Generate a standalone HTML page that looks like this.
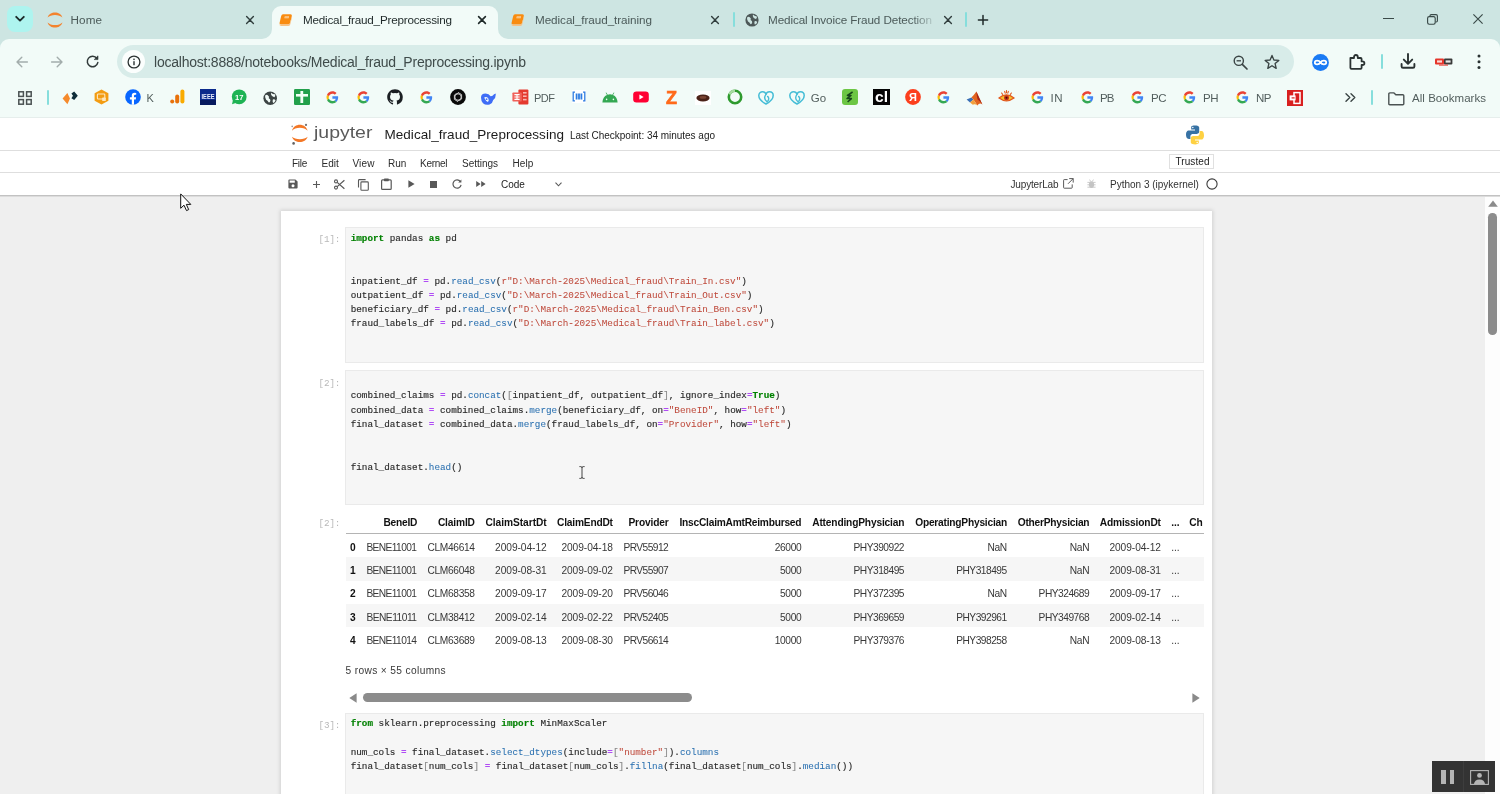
<!DOCTYPE html>
<html lang="en"><head><meta charset="utf-8"><title>Medical_fraud_Preprocessing</title>
<style>

html,body{margin:0;padding:0;}
body{width:1500px;height:794px;overflow:hidden;background:#efefef;}
#root{position:relative;width:1500px;height:794px;overflow:hidden;will-change:transform;font-family:"Liberation Sans",sans-serif;}
#root svg{overflow:visible;}
.code{position:absolute;white-space:pre;font-family:"Liberation Mono",monospace;font-size:9.3px;line-height:14.25px;color:#2a2a2a;margin:0;-webkit-text-stroke:0.15px;}
.t{position:absolute;white-space:pre;}
.m{font-family:"Liberation Mono",monospace;}
.k{color:#008000;font-weight:bold}
.o{color:#b04cf5;font-weight:bold;-webkit-text-stroke:0}
.s{color:#bf4a3c;-webkit-text-stroke:0.05px}
.f{color:#2a70b0;-webkit-text-stroke:0.05px}
.g{color:#8a8a8a}
.cell{position:absolute;left:345px;width:857px;background:#f6f6f6;border:1px solid #eaeaea;box-sizing:content-box;}
</style></head>
<body>
<div id="root">
<div style="position:absolute;left:0px;top:0px;width:1500px;height:50px;background:#cde5e2;"></div>
<div style="position:absolute;left:0px;top:38.5px;width:1500px;height:79.5px;background:#f2fbf8;border-radius:9px 9px 0 0;"></div>
<div style="position:absolute;left:0px;top:117px;width:1500px;height:1px;background:#e6eeec;"></div>
<div style="position:absolute;left:0px;top:118px;width:1500px;height:78px;background:#ffffff;"></div>
<div style="position:absolute;left:0px;top:150px;width:1500px;height:1px;background:#dedede;"></div>
<div style="position:absolute;left:0px;top:172px;width:1500px;height:1px;background:#dedede;"></div>
<div style="position:absolute;left:0px;top:195px;width:1500px;height:1px;background:#c2c2c2;"></div>
<div style="position:absolute;left:0px;top:196px;width:1500px;height:1px;background:#dcdcdc;"></div>
<div style="position:absolute;left:7px;top:6px;width:26px;height:26px;background:#aef4ef;border-radius:8px;"></div>
<svg style="position:absolute;left:15px;top:15px;" width="10" height="8" viewBox="0 0 10 8"><path d="M1.2 1.8 L5 5.6 L8.8 1.8" fill="none" stroke="#1d2b2b" stroke-width="1.9" stroke-linecap="round" stroke-linejoin="round"/></svg>
<svg style="position:absolute;left:46.5px;top:11.5px;" width="16" height="16" viewBox="0 0 16 16"><path d="M0.6 5.6 C2.4 -1.2 13.6 -1.2 15.4 5.6 C12.4 2.2 3.6 2.2 0.6 5.6Z" fill="#f3832e"/><path d="M0.6 10.4 C2.4 17.2 13.6 17.2 15.4 10.4 C12.4 13.8 3.6 13.8 0.6 10.4Z" fill="#f3832e"/></svg>
<svg style="position:absolute;left:246px;top:16px;" width="8" height="8" viewBox="0 0 8 8"><path d="M0.6 0.6 L7.4 7.4 M7.4 0.6 L0.6 7.4" stroke="#303d3d" stroke-width="1.4" stroke-linecap="round"/></svg>
<div style="position:absolute;left:272.4px;top:6px;width:225.8px;height:34px;background:#f2fbf8;border-radius:9px 9px 0 0;"></div>
<svg style="position:absolute;left:262.4px;top:28.5px;" width="10" height="10" viewBox="0 0 10 10"><path d="M10 0 L10 10.5 L0 10.5 L0 10 A10 10 0 0 0 10 0Z" fill="#f2fbf8"/></svg>
<svg style="position:absolute;left:498px;top:28.5px;" width="10" height="10" viewBox="0 0 10 10"><path d="M0 0 L0 10.5 L10 10.5 L10 10 A10 10 0 0 1 0 0Z" fill="#f2fbf8"/></svg>
<svg style="position:absolute;left:279.2px;top:13.9px;" width="13.6" height="12.6" viewBox="0 0 15 14"><path d="M4.4 0.4 L12.6 0.4 Q14.8 0.4 14.2 2.6 L12.2 10 Q11.7 11.8 9.8 11.8 L2.2 11.8 Q0 11.8 0.6 9.8 L2.4 2.2 Q2.9 0.4 4.4 0.4Z" fill="#f98c10"/><path d="M0.6 10.8 Q1 11.9 2.4 11.8 L9.8 11.8 Q11.7 11.8 12.2 10 L14.3 2.2 Q14.7 3 14.4 4 L12.4 11.6 Q11.9 13.4 10 13.4 L2.4 13.4 Q0.2 13.4 0.6 10.8Z" fill="#f7c183"/><path d="M6.4 2.4 L11.2 2.4 L10.7 4.6 L5.9 4.6Z" fill="#fbd9ae"/><path d="M6.6 3.5 L10.6 3.5" stroke="#f98c10" stroke-width="0.5"/></svg>
<svg style="position:absolute;left:478px;top:16px;" width="8" height="8" viewBox="0 0 8 8"><path d="M0.6 0.6 L7.4 7.4 M7.4 0.6 L0.6 7.4" stroke="#1f2929" stroke-width="1.6" stroke-linecap="round"/></svg>
<svg style="position:absolute;left:511.2px;top:13.9px;" width="13.6" height="12.6" viewBox="0 0 15 14"><path d="M4.4 0.4 L12.6 0.4 Q14.8 0.4 14.2 2.6 L12.2 10 Q11.7 11.8 9.8 11.8 L2.2 11.8 Q0 11.8 0.6 9.8 L2.4 2.2 Q2.9 0.4 4.4 0.4Z" fill="#f98c10"/><path d="M0.6 10.8 Q1 11.9 2.4 11.8 L9.8 11.8 Q11.7 11.8 12.2 10 L14.3 2.2 Q14.7 3 14.4 4 L12.4 11.6 Q11.9 13.4 10 13.4 L2.4 13.4 Q0.2 13.4 0.6 10.8Z" fill="#f7c183"/><path d="M6.4 2.4 L11.2 2.4 L10.7 4.6 L5.9 4.6Z" fill="#fbd9ae"/><path d="M6.6 3.5 L10.6 3.5" stroke="#f98c10" stroke-width="0.5"/></svg>
<svg style="position:absolute;left:710.5px;top:16px;" width="8" height="8" viewBox="0 0 8 8"><path d="M0.6 0.6 L7.4 7.4 M7.4 0.6 L0.6 7.4" stroke="#303d3d" stroke-width="1.4" stroke-linecap="round"/></svg>
<div style="position:absolute;left:733px;top:12px;width:2px;height:15px;background:#86dedc;border-radius:1px;"></div>
<svg style="position:absolute;left:744.5px;top:13px;" width="14" height="14" viewBox="0 0 14 14"><circle cx="7" cy="7" r="6.6" fill="#4d5858"/><path d="M2.2 4.2 Q4 3 5 4.6 Q6.4 5.4 5.6 7 Q7.4 7.6 7.2 9.6 Q6.6 11.6 5.4 11 Q4.6 9 3 8.4 Q1.4 6.4 2.2 4.2Z M8 1.6 Q9.6 3.4 11.6 3.2 Q12.6 5 11 6 Q9.4 5.6 8.4 4.4 Q7.4 3 8 1.6Z M9.6 8.2 Q11.4 7.6 12.2 9.2 Q11.4 11.4 9.8 11.6 Q9 10 9.6 8.2Z" fill="#cde5e2"/></svg>
<svg style="position:absolute;left:943.5px;top:16px;" width="8" height="8" viewBox="0 0 8 8"><path d="M0.6 0.6 L7.4 7.4 M7.4 0.6 L0.6 7.4" stroke="#303d3d" stroke-width="1.4" stroke-linecap="round"/></svg>
<div style="position:absolute;left:964.5px;top:12px;width:2px;height:15px;background:#86dedc;border-radius:1px;"></div>
<svg style="position:absolute;left:978px;top:15px;" width="10" height="10" viewBox="0 0 10 10"><path d="M5 0.4 V9.6 M0.4 5 H9.6" stroke="#1f2a2a" stroke-width="1.5" stroke-linecap="round"/></svg>
<div style="position:absolute;left:1383px;top:18px;width:11px;height:1.2px;background:#3a4a48;"></div>
<svg style="position:absolute;left:1427px;top:14px;" width="11" height="11" viewBox="0 0 11 11"><rect x="0.6" y="2.6" width="7.6" height="7.6" rx="1.6" fill="none" stroke="#3a4a48" stroke-width="1.15"/><path d="M3 2.4 V1.8 Q3 0.6 4.2 0.6 H9 Q10.4 0.6 10.4 2 V6.8 Q10.4 8 9.2 8 H8.6" fill="none" stroke="#3a4a48" stroke-width="1.15"/></svg>
<svg style="position:absolute;left:1473px;top:14px;" width="10" height="10" viewBox="0 0 10 10"><path d="M0.4 0.4 L9.6 9.6 M9.6 0.4 L0.4 9.6" stroke="#3a4a48" stroke-width="1.15"/></svg>
<svg style="position:absolute;left:15.5px;top:55.5px;" width="12" height="12" viewBox="0 0 12 12"><path d="M11.4 6 H1.2 M5.8 1.2 L1 6 L5.8 10.8" fill="none" stroke="#a3adac" stroke-width="1.4" stroke-linecap="round" stroke-linejoin="round"/></svg>
<svg style="position:absolute;left:50.5px;top:55.5px;" width="12" height="12" viewBox="0 0 12 12"><path d="M0.6 6 H10.8 M6.2 1.2 L11 6 L6.2 10.8" fill="none" stroke="#a3adac" stroke-width="1.4" stroke-linecap="round" stroke-linejoin="round"/></svg>
<svg style="position:absolute;left:85.5px;top:54.5px;" width="13" height="13" viewBox="0 0 13 13"><path d="M10.9 3.4 A5.3 5.3 0 1 0 11.8 7.6" fill="none" stroke="#313a3a" stroke-width="1.5" stroke-linecap="round"/><path d="M12 0.8 V4.6 H8.2Z" fill="#313a3a" stroke="#313a3a" stroke-width="0.6" stroke-linejoin="round"/></svg>
<div style="position:absolute;left:117px;top:45px;width:1177px;height:33px;background:#d8ece9;border-radius:16.5px;"></div>
<div style="position:absolute;left:122px;top:50px;width:23px;height:23px;background:#fbfefd;border-radius:50%;"></div>
<svg style="position:absolute;left:126.5px;top:54.5px;" width="14" height="14" viewBox="0 0 14 14"><circle cx="7" cy="7" r="5.9" fill="none" stroke="#2a3232" stroke-width="1.3"/><rect x="6.3" y="6.2" width="1.4" height="4" fill="#2a3232"/><rect x="6.3" y="3.6" width="1.4" height="1.5" fill="#2a3232"/></svg>
<svg style="position:absolute;left:1233px;top:54.5px;" width="15" height="15" viewBox="0 0 15 15"><circle cx="5.8" cy="5.8" r="4.6" fill="none" stroke="#3a4444" stroke-width="1.4"/><path d="M9.3 9.3 L14 14" stroke="#3a4444" stroke-width="1.7" stroke-linecap="round"/><path d="M3.6 5.8 H8" stroke="#3a4444" stroke-width="1.3"/></svg>
<svg style="position:absolute;left:1263.5px;top:54px;" width="16" height="16" viewBox="0 0 16 16"><path d="M8 1.4 L9.9 6 L14.8 6.4 L11.1 9.6 L12.2 14.4 L8 11.8 L3.8 14.4 L4.9 9.6 L1.2 6.4 L6.1 6Z" fill="none" stroke="#3a4444" stroke-width="1.35" stroke-linejoin="round"/></svg>
<svg style="position:absolute;left:1312px;top:53.5px;" width="17" height="17" viewBox="0 0 17 17"><circle cx="8.5" cy="8.5" r="8.4" fill="#1a7af4"/><path d="M8.5 8.5 C7 6 2.8 6 2.8 8.5 C2.8 11 7 11 8.5 8.5 C10 6 14.2 6 14.2 8.5 C14.2 11 10 11 8.5 8.5Z" fill="none" stroke="#ffffff" stroke-width="1.8"/></svg>
<svg style="position:absolute;left:1348px;top:53px;" width="18" height="17" viewBox="0 0 18 17"><path d="M2.4 5 H6 V4.2 Q6 2 7.9 2 Q9.8 2 9.8 4.2 V5 H12.6 Q13.6 5 13.6 6 V8.4 H14.4 Q16.4 8.4 16.4 10.2 Q16.4 12 14.4 12 H13.6 V14.8 Q13.6 15.8 12.6 15.8 H3.4 Q2.4 15.8 2.4 14.8Z" fill="none" stroke="#2a3232" stroke-width="1.8" stroke-linejoin="round"/></svg>
<div style="position:absolute;left:1381px;top:54px;width:2px;height:15px;background:#86dedc;border-radius:1px;"></div>
<svg style="position:absolute;left:1400px;top:53px;" width="16" height="16" viewBox="0 0 16 16"><path d="M8 1 V10.6 M3.8 6.6 L8 10.8 L12.2 6.6" fill="none" stroke="#2a3232" stroke-width="1.9" stroke-linecap="round" stroke-linejoin="round"/><path d="M1.6 11 V13.4 Q1.6 14.8 3 14.8 H13 Q14.4 14.8 14.4 13.4 V11" fill="none" stroke="#2a3232" stroke-width="1.9" stroke-linecap="round"/></svg>
<svg style="position:absolute;left:1435px;top:58px;" width="18" height="8" viewBox="0 0 18 8"><rect x="0" y="0.6" width="9" height="6" rx="1" fill="#e5352b"/><rect x="9" y="0.6" width="8.4" height="6" rx="1" fill="#3a3a3a"/><rect x="2" y="2.4" width="5" height="2.2" fill="#fbd9d6"/><rect x="10.6" y="2.4" width="5" height="2.2" fill="#e8e8e8"/><rect x="4" y="6.6" width="9" height="1" fill="#e5352b"/></svg>
<svg style="position:absolute;left:1476.6px;top:53px;" width="4" height="17" viewBox="0 0 4 17"><circle cx="2" cy="3" r="1.5" fill="#2a3232"/><circle cx="2" cy="8.7" r="1.5" fill="#2a3232"/><circle cx="2" cy="14.4" r="1.5" fill="#2a3232"/></svg>
<svg style="position:absolute;left:18px;top:91px;" width="14" height="14" viewBox="0 0 14 14"><g fill="none" stroke="#4a5252" stroke-width="1.5"><rect x="0.8" y="0.8" width="4.6" height="4.6"/><rect x="8.6" y="0.8" width="4.6" height="4.6"/><rect x="0.8" y="8.6" width="4.6" height="4.6"/><rect x="8.6" y="8.6" width="4.6" height="4.6"/></g></svg>
<div style="position:absolute;left:47px;top:90px;width:2px;height:15px;background:#86dedc;border-radius:1px;"></div>
<svg style="position:absolute;left:62px;top:91px;" width="17" height="14" viewBox="0 0 17 14"><path d="M0.6 7.6 L5.4 2 L8 7.6 L5.4 13.2Z" fill="#f58a2c"/><path d="M9.4 2.4 L12.2 0.6 L15.8 4.8 L12.2 9 L9.4 7.2 L11 4.8Z" fill="#0f2d3a"/></svg>
<svg style="position:absolute;left:94px;top:89.3px;" width="15" height="16" viewBox="0 0 15 16"><path d="M7.5 0.4 L14.4 4.2 V11.8 L7.5 15.6 L0.6 11.8 V4.2Z" fill="#f39c12"/><rect x="3.4" y="5" width="7.4" height="5" rx="0.8" fill="none" stroke="#fde7c0" stroke-width="1.1"/><rect x="8.2" y="8.6" width="3.6" height="3.4" rx="0.6" fill="#fde7c0"/></svg>
<svg style="position:absolute;left:125px;top:89.3px;" width="16" height="16" viewBox="0 0 16 16"><circle cx="8" cy="8" r="7.8" fill="#0866ff"/><path d="M9 15.7 V10.4 H10.8 L11.1 8.2 H9 V6.9 Q9 5.8 10.2 5.8 H11.2 V3.9 Q10.4 3.75 9.6 3.75 Q6.8 3.75 6.8 6.6 V8.2 H4.9 V10.4 H6.8 V15.7Z" fill="#ffffff"/></svg>
<svg style="position:absolute;left:170px;top:89.3px;" width="15" height="15" viewBox="0 0 15 15"><rect x="10.4" y="0.4" width="4" height="14.2" rx="2" fill="#f9ab00"/><rect x="5.2" y="5.6" width="4" height="9" rx="2" fill="#e8710a"/><circle cx="2.2" cy="12.6" r="2" fill="#e8710a"/></svg>
<svg style="position:absolute;left:200px;top:89.3px;" width="16" height="16" viewBox="0 0 16 16"><rect width="16" height="16" fill="#0b2a8c"/><rect y="11" width="16" height="5" fill="#071a5e"/><text x="8" y="10.4" font-family="Liberation Sans, sans-serif" font-size="6.6" font-weight="700" fill="#e9eefc" text-anchor="middle" textLength="13" lengthAdjust="spacingAndGlyphs">IEEE</text></svg>
<svg style="position:absolute;left:231px;top:89.3px;" width="16" height="16" viewBox="0 0 16 16"><circle cx="8.2" cy="7.8" r="7.4" fill="#1eb354"/><path d="M2 11 L1 15.2 L5.4 13.8Z" fill="#1eb354"/><text x="8.2" y="10.6" font-family="Liberation Sans, sans-serif" font-size="7.6" font-weight="700" fill="#ffffff" text-anchor="middle">17</text></svg>
<svg style="position:absolute;left:263px;top:90.6px;" width="14.4" height="14.4" viewBox="0 0 14 14"><circle cx="7" cy="7" r="6.6" fill="#3c4444"/><path d="M2.2 4.2 Q4 3 5 4.6 Q6.4 5.4 5.6 7 Q7.4 7.6 7.2 9.6 Q6.6 11.6 5.4 11 Q4.6 9 3 8.4 Q1.4 6.4 2.2 4.2Z M8 1.6 Q9.6 3.4 11.6 3.2 Q12.6 5 11 6 Q9.4 5.6 8.4 4.4 Q7.4 3 8 1.6Z M9.6 8.2 Q11.4 7.6 12.2 9.2 Q11.4 11.4 9.8 11.6 Q9 10 9.6 8.2Z" fill="#f2fbf8"/></svg>
<svg style="position:absolute;left:293.5px;top:89.3px;" width="16" height="16" viewBox="0 0 16 16"><rect width="16" height="16" rx="1.2" fill="#22a04b"/><rect x="6.4" y="2" width="2.8" height="12" fill="#f2fff5"/><rect x="2" y="5" width="12" height="2.6" fill="#f2fff5"/></svg>
<svg style="position:absolute;left:325.6px;top:91.39999999999999px;" width="12.8" height="12.8" viewBox="0 0 14 14"><path d="M13.3 7.15 c0 -0.5 -0.04 -0.9 -0.13 -1.3 H7 v2.5 h3.6 c-0.08 0.6 -0.47 1.5 -1.35 2.1 l2.05 1.6 c1.25 -1.15 2 -2.85 2 -4.9z" fill="#4285f4"/><path d="M7 13.6 c1.8 0 3.3 -0.6 4.4 -1.6 l-2.1 -1.65 c-0.56 0.4 -1.3 0.66 -2.3 0.66 -1.75 0 -3.25 -1.15 -3.8 -2.75 l-2.1 1.63 C2.2 12.1 4.4 13.6 7 13.6z" fill="#34a853"/><path d="M3.2 8.25 a4 4 0 0 1 0 -2.5 L1.1 4.1 a6.6 6.6 0 0 0 0 5.8z" fill="#fbbc05"/><path d="M7 3 c1.25 0 2.1 0.54 2.6 1 l1.9 -1.85 C10.3 1.05 8.8 0.4 7 0.4 4.4 0.4 2.2 1.9 1.1 4.1 l2.1 1.65 C3.75 4.15 5.25 3 7 3z" fill="#ea4335"/></svg>
<svg style="position:absolute;left:356.6px;top:91.39999999999999px;" width="12.8" height="12.8" viewBox="0 0 14 14"><path d="M13.3 7.15 c0 -0.5 -0.04 -0.9 -0.13 -1.3 H7 v2.5 h3.6 c-0.08 0.6 -0.47 1.5 -1.35 2.1 l2.05 1.6 c1.25 -1.15 2 -2.85 2 -4.9z" fill="#4285f4"/><path d="M7 13.6 c1.8 0 3.3 -0.6 4.4 -1.6 l-2.1 -1.65 c-0.56 0.4 -1.3 0.66 -2.3 0.66 -1.75 0 -3.25 -1.15 -3.8 -2.75 l-2.1 1.63 C2.2 12.1 4.4 13.6 7 13.6z" fill="#34a853"/><path d="M3.2 8.25 a4 4 0 0 1 0 -2.5 L1.1 4.1 a6.6 6.6 0 0 0 0 5.8z" fill="#fbbc05"/><path d="M7 3 c1.25 0 2.1 0.54 2.6 1 l1.9 -1.85 C10.3 1.05 8.8 0.4 7 0.4 4.4 0.4 2.2 1.9 1.1 4.1 l2.1 1.65 C3.75 4.15 5.25 3 7 3z" fill="#ea4335"/></svg>
<svg style="position:absolute;left:387px;top:89.3px;" width="16" height="16" viewBox="0 0 16 16"><path d="M8 0.3 C3.7 0.3 0.2 3.8 0.2 8.1 c0 3.45 2.24 6.37 5.34 7.4 .39 .07 .53 -.17 .53 -.38 l-.01 -1.45 c-2.17 .47 -2.63 -.92 -2.63 -.92 -.35 -.9 -.87 -1.14 -.87 -1.14 -.71 -.48 .05 -.47 .05 -.47 .78 .05 1.2 .8 1.2 .8 .7 1.2 1.83 .85 2.28 .65 .07 -.5 .27 -.85 .5 -1.05 -1.73 -.2 -3.55 -.87 -3.55 -3.86 0 -.85 .3 -1.55 .8 -2.1 -.08 -.2 -.35 -1 .08 -2.06 0 0 .65 -.2 2.14 .8 a7.4 7.4 0 0 1 3.9 0 c1.5 -1 2.14 -.8 2.14 -.8 .43 1.07 .16 1.87 .08 2.06 .5 .55 .8 1.25 .8 2.1 0 3 -1.83 3.66 -3.57 3.85 .28 .24 .53 .72 .53 1.45 l-.01 2.15 c0 .2 .14 .45 .54 .38 A7.8 7.8 0 0 0 15.8 8.1 C15.8 3.8 12.3 .3 8 .3z" fill="#1b1f23"/></svg>
<svg style="position:absolute;left:419.6px;top:91.39999999999999px;" width="12.8" height="12.8" viewBox="0 0 14 14"><path d="M13.3 7.15 c0 -0.5 -0.04 -0.9 -0.13 -1.3 H7 v2.5 h3.6 c-0.08 0.6 -0.47 1.5 -1.35 2.1 l2.05 1.6 c1.25 -1.15 2 -2.85 2 -4.9z" fill="#4285f4"/><path d="M7 13.6 c1.8 0 3.3 -0.6 4.4 -1.6 l-2.1 -1.65 c-0.56 0.4 -1.3 0.66 -2.3 0.66 -1.75 0 -3.25 -1.15 -3.8 -2.75 l-2.1 1.63 C2.2 12.1 4.4 13.6 7 13.6z" fill="#34a853"/><path d="M3.2 8.25 a4 4 0 0 1 0 -2.5 L1.1 4.1 a6.6 6.6 0 0 0 0 5.8z" fill="#fbbc05"/><path d="M7 3 c1.25 0 2.1 0.54 2.6 1 l1.9 -1.85 C10.3 1.05 8.8 0.4 7 0.4 4.4 0.4 2.2 1.9 1.1 4.1 l2.1 1.65 C3.75 4.15 5.25 3 7 3z" fill="#ea4335"/></svg>
<svg style="position:absolute;left:449.5px;top:89.3px;" width="16" height="16" viewBox="0 0 16 16"><circle cx="8" cy="8" r="7.9" fill="#0a0a0a"/><g fill="none" stroke="#d8d8d8" stroke-width="0.9"><circle cx="8" cy="8" r="3.2"/><path d="M8 3.4 L11.6 5.6 V10 M8 12.6 L4.4 10.4 V6 M4.6 5.6 L8.4 4 M11.4 10.4 L7.6 12"/></g></svg>
<svg style="position:absolute;left:480px;top:91.5px;" width="17" height="14" viewBox="0 0 17 14"><path d="M1 5.6 Q1 1.4 5.6 1.4 Q9 1.4 10.6 4.2 Q12.6 4.4 13.8 2.6 Q14.6 1.4 16.2 1.8 Q15.4 2.4 15.6 3.6 Q15.8 6.4 13.2 8 Q12.8 11 9.6 12.4 Q5.8 13.6 3 11.2 Q1 9.2 1 5.6Z" fill="#3f6df6"/><path d="M4.2 5.4 Q6.4 4.2 8.2 6.2 Q9.4 8.2 8 10 Q6 9.4 5.2 7.6Z" fill="#f3faf9"/><circle cx="6.6" cy="7.2" r="0.9" fill="#3f6df6"/></svg>
<svg style="position:absolute;left:512px;top:89.3px;" width="17" height="16" viewBox="0 0 17 16"><rect x="6.4" y="0.6" width="10" height="14.8" rx="1" fill="#e43a2f"/><rect x="0.4" y="3.4" width="9.4" height="9.2" rx="0.8" fill="#f0625a"/><path d="M2.4 5.6 H7.6 M2.4 8 H7.6 M2.4 10.4 H7.6 M5 5.6 V10.4" stroke="#ffffff" stroke-width="1.1"/><rect x="11" y="3" width="3.6" height="1.6" fill="#f9b5b0"/><rect x="11" y="6.4" width="3.6" height="1.6" fill="#f9b5b0"/><rect x="11" y="9.8" width="3.6" height="1.6" fill="#f9b5b0"/></svg>
<svg style="position:absolute;left:571.5px;top:90.3px;" width="14" height="13" viewBox="0 0 14 13"><rect x="0" y="0" width="14" height="13" fill="#ffffff"/><path d="M3 2.2 H1.2 V10.8 H3 M11 2.2 H12.8 V10.8 H11" fill="none" stroke="#2f7de1" stroke-width="1.3"/><path d="M4.6 3.6 V9.4 M7 3.6 V9.4 M9.4 3.6 V9.4" stroke="#2f7de1" stroke-width="1.8"/></svg>
<svg style="position:absolute;left:601.5px;top:92px;" width="16" height="11" viewBox="0 0 16 11"><path d="M0.4 10.6 Q0.8 4.6 5 3 L3.6 0.8 L4.2 0.4 L5.7 2.7 Q8 1.9 10.3 2.7 L11.8 0.4 L12.4 0.8 L11 3 Q15.2 4.6 15.6 10.6Z" fill="#34a853"/><circle cx="4.6" cy="7.4" r="0.8" fill="#eafff0"/><circle cx="11.4" cy="7.4" r="0.8" fill="#eafff0"/></svg>
<svg style="position:absolute;left:632.5px;top:91.2px;" width="16" height="12" viewBox="0 0 16 12"><rect x="0.2" y="0.4" width="15.6" height="11" rx="3.2" fill="#ff0033"/><path d="M6.4 3.4 L10.6 5.9 L6.4 8.4Z" fill="#ffffff"/></svg>
<svg style="position:absolute;left:665px;top:89.4px;" width="13" height="16" viewBox="0 0 13 16"><text x="6.5" y="14.6" font-family="Liberation Sans, sans-serif" font-size="18" font-weight="700" fill="#ff6a1a" stroke="#ff6a1a" stroke-width="0.7" text-anchor="middle">Z</text></svg>
<svg style="position:absolute;left:695px;top:91px;" width="16" height="14" viewBox="0 0 16 14"><rect width="16" height="14" fill="#ffffff"/><ellipse cx="8" cy="7" rx="6.6" ry="3.4" fill="#4a2218"/><ellipse cx="8" cy="6.4" rx="3.4" ry="1.4" fill="#7a4433"/></svg>
<svg style="position:absolute;left:726.5px;top:89.3px;" width="16" height="16" viewBox="0 0 16 16"><circle cx="8" cy="8" r="6.2" fill="none" stroke="#2e9a2e" stroke-width="2.6"/><path d="M8 1.8 A6.2 6.2 0 0 0 2.4 5.4" fill="none" stroke="#a6dba0" stroke-width="2.6"/></svg>
<svg style="position:absolute;left:757.5px;top:90.6px;" width="16" height="14" viewBox="0 0 16 14"><path d="M8 13 C3 10.4 0.8 7.4 0.8 4.6 C0.8 2.2 2.6 0.8 4.6 0.8 C6.4 0.8 7.6 2 8 3.4 C8.4 2 9.6 0.8 11.4 0.8 C13.4 0.8 15.2 2.2 15.2 4.6 C15.2 7.4 13 10.4 8 13Z" fill="none" stroke="#45bdd6" stroke-width="1.5" stroke-linejoin="round"/><path d="M8 3.4 C6.2 5.8 6.4 8.8 9 10.8 C11.2 9.2 11.2 6.8 9.6 5.4" fill="none" stroke="#45bdd6" stroke-width="1.4" stroke-linecap="round"/></svg>
<svg style="position:absolute;left:789.0px;top:90.6px;" width="16" height="14" viewBox="0 0 16 14"><path d="M8 13 C3 10.4 0.8 7.4 0.8 4.6 C0.8 2.2 2.6 0.8 4.6 0.8 C6.4 0.8 7.6 2 8 3.4 C8.4 2 9.6 0.8 11.4 0.8 C13.4 0.8 15.2 2.2 15.2 4.6 C15.2 7.4 13 10.4 8 13Z" fill="none" stroke="#45bdd6" stroke-width="1.5" stroke-linejoin="round"/><path d="M8 3.4 C6.2 5.8 6.4 8.8 9 10.8 C11.2 9.2 11.2 6.8 9.6 5.4" fill="none" stroke="#45bdd6" stroke-width="1.4" stroke-linecap="round"/></svg>
<svg style="position:absolute;left:842px;top:89.3px;" width="16" height="16" viewBox="0 0 16 16"><rect width="16" height="16" rx="3" fill="#6cc644"/><path d="M10.6 3 L5.4 6.4 H9 L5 9.6 H9.4 L5.6 13" fill="none" stroke="#17451a" stroke-width="1.5" stroke-linejoin="round"/></svg>
<svg style="position:absolute;left:873px;top:89.3px;" width="17" height="16" viewBox="0 0 17 16"><rect width="17" height="16" fill="#050505"/><text x="8.5" y="13" font-family="Liberation Sans, sans-serif" font-size="14" font-weight="700" fill="#ffffff" text-anchor="middle" textLength="13" lengthAdjust="spacingAndGlyphs">cl</text></svg>
<svg style="position:absolute;left:904.5px;top:89.3px;" width="16" height="16" viewBox="0 0 16 16"><circle cx="8" cy="8" r="7.9" fill="#fc3f1d"/><text x="8" y="12" font-family="Liberation Sans, sans-serif" font-size="11" font-weight="700" fill="#ffffff" text-anchor="middle">Я</text></svg>
<svg style="position:absolute;left:936.6px;top:91.39999999999999px;" width="12.8" height="12.8" viewBox="0 0 14 14"><path d="M13.3 7.15 c0 -0.5 -0.04 -0.9 -0.13 -1.3 H7 v2.5 h3.6 c-0.08 0.6 -0.47 1.5 -1.35 2.1 l2.05 1.6 c1.25 -1.15 2 -2.85 2 -4.9z" fill="#4285f4"/><path d="M7 13.6 c1.8 0 3.3 -0.6 4.4 -1.6 l-2.1 -1.65 c-0.56 0.4 -1.3 0.66 -2.3 0.66 -1.75 0 -3.25 -1.15 -3.8 -2.75 l-2.1 1.63 C2.2 12.1 4.4 13.6 7 13.6z" fill="#34a853"/><path d="M3.2 8.25 a4 4 0 0 1 0 -2.5 L1.1 4.1 a6.6 6.6 0 0 0 0 5.8z" fill="#fbbc05"/><path d="M7 3 c1.25 0 2.1 0.54 2.6 1 l1.9 -1.85 C10.3 1.05 8.8 0.4 7 0.4 4.4 0.4 2.2 1.9 1.1 4.1 l2.1 1.65 C3.75 4.15 5.25 3 7 3z" fill="#ea4335"/></svg>
<svg style="position:absolute;left:966px;top:91px;" width="17" height="15" viewBox="0 0 17 15"><path d="M0.6 8.6 L5.4 6.4 L7.4 8.4 L4 11.4Z" fill="#3a6fb6"/><path d="M5.4 6.4 Q8.4 3.4 10.4 0.4 Q12.6 5.4 16.4 13.4 Q13.4 11.4 11.4 14.4 Q9.4 11.4 7.4 8.4Z" fill="#e2641f"/><path d="M10.4 0.4 Q12.6 5.4 16.4 13.4 Q13.6 9.4 11.6 8.4 Q10.6 4.4 10.4 0.4Z" fill="#a4241a"/><path d="M4 11.4 L7.4 8.4 Q9.4 11.4 11.4 14.4 Q8.6 12.6 6.8 13.8Z" fill="#f2a03d"/></svg>
<svg style="position:absolute;left:998px;top:89.3px;" width="17" height="15" viewBox="0 0 17 15"><path d="M1 9 Q8.5 2.6 16 9 Q8.5 14.6 1 9Z" fill="#f7c12d" stroke="#e1571c" stroke-width="1.2"/><circle cx="8.5" cy="8.8" r="2.5" fill="#c5311a"/><circle cx="8.5" cy="8.8" r="1" fill="#3a0f0a"/><path d="M3.6 4 L4.6 5.4 M6.6 2.4 L7.2 4.2 M10.4 2.4 L9.8 4.2 M13.4 4 L12.4 5.4 M8.5 1.6 V3.8" stroke="#e1571c" stroke-width="1.1" stroke-linecap="round"/></svg>
<svg style="position:absolute;left:1030.6px;top:91.39999999999999px;" width="12.8" height="12.8" viewBox="0 0 14 14"><path d="M13.3 7.15 c0 -0.5 -0.04 -0.9 -0.13 -1.3 H7 v2.5 h3.6 c-0.08 0.6 -0.47 1.5 -1.35 2.1 l2.05 1.6 c1.25 -1.15 2 -2.85 2 -4.9z" fill="#4285f4"/><path d="M7 13.6 c1.8 0 3.3 -0.6 4.4 -1.6 l-2.1 -1.65 c-0.56 0.4 -1.3 0.66 -2.3 0.66 -1.75 0 -3.25 -1.15 -3.8 -2.75 l-2.1 1.63 C2.2 12.1 4.4 13.6 7 13.6z" fill="#34a853"/><path d="M3.2 8.25 a4 4 0 0 1 0 -2.5 L1.1 4.1 a6.6 6.6 0 0 0 0 5.8z" fill="#fbbc05"/><path d="M7 3 c1.25 0 2.1 0.54 2.6 1 l1.9 -1.85 C10.3 1.05 8.8 0.4 7 0.4 4.4 0.4 2.2 1.9 1.1 4.1 l2.1 1.65 C3.75 4.15 5.25 3 7 3z" fill="#ea4335"/></svg>
<svg style="position:absolute;left:1080.6px;top:91.39999999999999px;" width="12.8" height="12.8" viewBox="0 0 14 14"><path d="M13.3 7.15 c0 -0.5 -0.04 -0.9 -0.13 -1.3 H7 v2.5 h3.6 c-0.08 0.6 -0.47 1.5 -1.35 2.1 l2.05 1.6 c1.25 -1.15 2 -2.85 2 -4.9z" fill="#4285f4"/><path d="M7 13.6 c1.8 0 3.3 -0.6 4.4 -1.6 l-2.1 -1.65 c-0.56 0.4 -1.3 0.66 -2.3 0.66 -1.75 0 -3.25 -1.15 -3.8 -2.75 l-2.1 1.63 C2.2 12.1 4.4 13.6 7 13.6z" fill="#34a853"/><path d="M3.2 8.25 a4 4 0 0 1 0 -2.5 L1.1 4.1 a6.6 6.6 0 0 0 0 5.8z" fill="#fbbc05"/><path d="M7 3 c1.25 0 2.1 0.54 2.6 1 l1.9 -1.85 C10.3 1.05 8.8 0.4 7 0.4 4.4 0.4 2.2 1.9 1.1 4.1 l2.1 1.65 C3.75 4.15 5.25 3 7 3z" fill="#ea4335"/></svg>
<svg style="position:absolute;left:1131.1px;top:91.39999999999999px;" width="12.8" height="12.8" viewBox="0 0 14 14"><path d="M13.3 7.15 c0 -0.5 -0.04 -0.9 -0.13 -1.3 H7 v2.5 h3.6 c-0.08 0.6 -0.47 1.5 -1.35 2.1 l2.05 1.6 c1.25 -1.15 2 -2.85 2 -4.9z" fill="#4285f4"/><path d="M7 13.6 c1.8 0 3.3 -0.6 4.4 -1.6 l-2.1 -1.65 c-0.56 0.4 -1.3 0.66 -2.3 0.66 -1.75 0 -3.25 -1.15 -3.8 -2.75 l-2.1 1.63 C2.2 12.1 4.4 13.6 7 13.6z" fill="#34a853"/><path d="M3.2 8.25 a4 4 0 0 1 0 -2.5 L1.1 4.1 a6.6 6.6 0 0 0 0 5.8z" fill="#fbbc05"/><path d="M7 3 c1.25 0 2.1 0.54 2.6 1 l1.9 -1.85 C10.3 1.05 8.8 0.4 7 0.4 4.4 0.4 2.2 1.9 1.1 4.1 l2.1 1.65 C3.75 4.15 5.25 3 7 3z" fill="#ea4335"/></svg>
<svg style="position:absolute;left:1182.6px;top:91.39999999999999px;" width="12.8" height="12.8" viewBox="0 0 14 14"><path d="M13.3 7.15 c0 -0.5 -0.04 -0.9 -0.13 -1.3 H7 v2.5 h3.6 c-0.08 0.6 -0.47 1.5 -1.35 2.1 l2.05 1.6 c1.25 -1.15 2 -2.85 2 -4.9z" fill="#4285f4"/><path d="M7 13.6 c1.8 0 3.3 -0.6 4.4 -1.6 l-2.1 -1.65 c-0.56 0.4 -1.3 0.66 -2.3 0.66 -1.75 0 -3.25 -1.15 -3.8 -2.75 l-2.1 1.63 C2.2 12.1 4.4 13.6 7 13.6z" fill="#34a853"/><path d="M3.2 8.25 a4 4 0 0 1 0 -2.5 L1.1 4.1 a6.6 6.6 0 0 0 0 5.8z" fill="#fbbc05"/><path d="M7 3 c1.25 0 2.1 0.54 2.6 1 l1.9 -1.85 C10.3 1.05 8.8 0.4 7 0.4 4.4 0.4 2.2 1.9 1.1 4.1 l2.1 1.65 C3.75 4.15 5.25 3 7 3z" fill="#ea4335"/></svg>
<svg style="position:absolute;left:1235.6px;top:91.39999999999999px;" width="12.8" height="12.8" viewBox="0 0 14 14"><path d="M13.3 7.15 c0 -0.5 -0.04 -0.9 -0.13 -1.3 H7 v2.5 h3.6 c-0.08 0.6 -0.47 1.5 -1.35 2.1 l2.05 1.6 c1.25 -1.15 2 -2.85 2 -4.9z" fill="#4285f4"/><path d="M7 13.6 c1.8 0 3.3 -0.6 4.4 -1.6 l-2.1 -1.65 c-0.56 0.4 -1.3 0.66 -2.3 0.66 -1.75 0 -3.25 -1.15 -3.8 -2.75 l-2.1 1.63 C2.2 12.1 4.4 13.6 7 13.6z" fill="#34a853"/><path d="M3.2 8.25 a4 4 0 0 1 0 -2.5 L1.1 4.1 a6.6 6.6 0 0 0 0 5.8z" fill="#fbbc05"/><path d="M7 3 c1.25 0 2.1 0.54 2.6 1 l1.9 -1.85 C10.3 1.05 8.8 0.4 7 0.4 4.4 0.4 2.2 1.9 1.1 4.1 l2.1 1.65 C3.75 4.15 5.25 3 7 3z" fill="#ea4335"/></svg>
<svg style="position:absolute;left:1287px;top:90px;" width="16" height="16" viewBox="0 0 16 16"><rect width="16" height="16" fill="#d8201f"/><rect x="7" y="2.6" width="6" height="10.8" fill="none" stroke="#ffffff" stroke-width="1.5"/><rect x="2.6" y="5.4" width="6" height="5" fill="#ffffff"/><path d="M4.6 7.9 H7.6" stroke="#d8201f" stroke-width="1.2"/></svg>
<svg style="position:absolute;left:1345px;top:93px;" width="11" height="9" viewBox="0 0 11 9"><path d="M1 0.8 L4.8 4.5 L1 8.2 M6 0.8 L9.8 4.5 L6 8.2" fill="none" stroke="#3a4444" stroke-width="1.4" stroke-linecap="round" stroke-linejoin="round"/></svg>
<div style="position:absolute;left:1371px;top:90px;width:2px;height:15px;background:#86dedc;border-radius:1px;"></div>
<svg style="position:absolute;left:1388px;top:91.5px;" width="17" height="14" viewBox="0 0 17 14"><path d="M1.8 0.9 H6 L7.8 2.8 H14.8 Q15.8 2.8 15.8 3.8 V11.8 Q15.8 12.8 14.8 12.8 H1.8 Q0.8 12.8 0.8 11.8 V1.9 Q0.8 0.9 1.8 0.9Z" fill="none" stroke="#4a5252" stroke-width="1.4" stroke-linejoin="round"/></svg>
<svg style="position:absolute;left:291px;top:124px;" width="18" height="21" viewBox="0 0 18 21"><path d="M1 6.8 C3 -1.2 14.6 -1.2 16.6 6.8 C13.6 2.6 4 2.6 1 6.8Z" fill="#f37726"/><path d="M1 12.8 C3 19.8 14.6 19.8 16.6 12.8 C13.6 16 4 16 1 12.8Z" fill="#f37726"/><circle cx="15" cy="0.9" r="1.15" fill="#767677"/><circle cx="1.2" cy="2.4" r="0.8" fill="#989798"/><circle cx="2.6" cy="19.4" r="1.3" fill="#616262"/></svg>
<svg style="position:absolute;left:1185px;top:124.6px;" width="20" height="20" viewBox="0 0 20 20"><path d="M9.8 0.6 C6 0.6 6.2 2.2 6.2 2.2 V4.6 H10 V5.4 H4 C4 5.4 1 5.1 1 9.6 C1 14.1 3.6 13.9 3.6 13.9 H5.4 V11.6 C5.4 11.6 5.3 9 8 9 H11.8 C11.8 9 14.2 9 14.2 6.6 V2.8 C14.2 2.8 14.6 0.6 9.8 0.6Z" fill="#3772a4"/><circle cx="7.8" cy="2.6" r="0.75" fill="#ffffff"/><path d="M10.2 19.4 C14 19.4 13.8 17.8 13.8 17.8 V15.4 H10 V14.6 H16 C16 14.6 19 14.9 19 10.4 C19 5.9 16.4 6.1 16.4 6.1 H14.6 V8.4 C14.6 8.4 14.7 11 12 11 H8.2 C8.2 11 5.8 11 5.8 13.4 V17.2 C5.8 17.2 5.4 19.4 10.2 19.4Z" fill="#fed142"/><circle cx="12.2" cy="17.4" r="0.75" fill="#ffffff"/></svg>
<div style="position:absolute;left:1169px;top:154px;width:45px;height:14.5px;background:#ffffff;border:1px solid #e0e0e0;box-sizing:border-box;"></div>
<svg style="position:absolute;left:288px;top:179px;" width="10" height="10" viewBox="0 0 10 10"><path d="M0.4 1.4 Q0.4 0.4 1.4 0.4 H7.4 L9.6 2.6 V8.6 Q9.6 9.6 8.6 9.6 H1.4 Q0.4 9.6 0.4 8.6Z" fill="#585858"/><rect x="1.6" y="1.5" width="5.2" height="2.2" fill="#ffffff"/><circle cx="5" cy="6.7" r="1.5" fill="#ffffff"/></svg>
<svg style="position:absolute;left:313px;top:180.5px;" width="7" height="7" viewBox="0 0 7 7"><path d="M3.5 0 V7 M0 3.5 H7" stroke="#585858" stroke-width="1.1"/></svg>
<svg style="position:absolute;left:334px;top:178.5px;" width="11" height="11" viewBox="0 0 11 11"><circle cx="2" cy="8.6" r="1.5" fill="none" stroke="#585858" stroke-width="1.1"/><circle cx="2" cy="2.4" r="1.5" fill="none" stroke="#585858" stroke-width="1.1"/><path d="M3.2 3.4 L10.4 9.8 M3.2 7.6 L10.4 1.2" stroke="#585858" stroke-width="1.2"/></svg>
<svg style="position:absolute;left:357.5px;top:178.5px;" width="11" height="12" viewBox="0 0 11 12"><path d="M7.6 0.6 H1.4 Q0.5 0.6 0.5 1.5 V8.6" fill="none" stroke="#585858" stroke-width="1.1"/><rect x="2.9" y="2.9" width="7.4" height="8.4" rx="0.9" fill="none" stroke="#585858" stroke-width="1.1"/></svg>
<svg style="position:absolute;left:381px;top:178px;" width="11" height="12" viewBox="0 0 11 12"><rect x="0.6" y="1.8" width="9.6" height="9.6" rx="0.9" fill="none" stroke="#585858" stroke-width="1.2"/><rect x="3" y="0.4" width="4.8" height="2.8" rx="0.6" fill="#585858"/></svg>
<svg style="position:absolute;left:407.5px;top:180px;" width="7" height="8" viewBox="0 0 7 8"><path d="M0.4 0.2 L6.6 4 L0.4 7.8Z" fill="#585858"/></svg>
<div style="position:absolute;left:430px;top:180.5px;width:7px;height:7px;background:#585858;"></div>
<svg style="position:absolute;left:452px;top:179px;" width="10" height="10" viewBox="0 0 10 10"><path d="M8.4 2.6 A4.1 4.1 0 1 0 9.1 5.8" fill="none" stroke="#585858" stroke-width="1.2"/><path d="M9.4 0.4 V3.6 H6.2Z" fill="#585858"/></svg>
<svg style="position:absolute;left:476px;top:181px;" width="10" height="6" viewBox="0 0 10 6"><path d="M0.2 0 L4.6 3 L0.2 6Z M5.2 0 L9.6 3 L5.2 6Z" fill="#585858"/></svg>
<svg style="position:absolute;left:554.5px;top:182px;" width="7" height="5" viewBox="0 0 7 5"><path d="M0.5 0.7 L3.5 3.8 L6.5 0.7" fill="none" stroke="#585858" stroke-width="1.1"/></svg>
<svg style="position:absolute;left:1063px;top:178px;" width="11" height="11" viewBox="0 0 11 11"><path d="M4.6 1.6 H1.2 Q0.6 1.6 0.6 2.2 V9.6 Q0.6 10.2 1.2 10.2 H8.6 Q9.2 10.2 9.2 9.6 V6.4" fill="none" stroke="#5a5a5a" stroke-width="1"/><path d="M6.2 0.6 H10.2 V4.6 M10.2 0.6 L5 5.8" fill="none" stroke="#5a5a5a" stroke-width="1"/></svg>
<svg style="position:absolute;left:1087px;top:179px;" width="9" height="10" viewBox="0 0 9 10"><ellipse cx="4.5" cy="5.6" rx="2.6" ry="3.4" fill="#c4c4c4"/><path d="M0.4 3.4 H8.6 M0.4 5.8 H8.6 M0.4 8.2 H8.6 M2.6 0.6 L3.6 2.4 M6.4 0.6 L5.4 2.4" stroke="#c4c4c4" stroke-width="0.9"/></svg>
<svg style="position:absolute;left:1205.5px;top:178px;" width="12" height="12" viewBox="0 0 12 12"><circle cx="6" cy="6" r="5.1" fill="#ffffff" stroke="#3a3a3a" stroke-width="1.1"/></svg>
<div style="position:absolute;left:1485px;top:197px;width:15px;height:597px;background:#fdfdfd;"></div>
<svg style="position:absolute;left:1487.5px;top:200px;" width="10" height="7" viewBox="0 0 10 7"><path d="M5 0.4 L9.8 6.8 H0.2Z" fill="#8a8a8a"/></svg>
<div style="position:absolute;left:1488.3px;top:213px;width:8.6px;height:122px;background:#8c8c8c;border-radius:4.3px;"></div>
<div style="position:absolute;left:281px;top:211px;width:931px;height:600px;background:#ffffff;box-shadow:0 0 4px 1px rgba(0,0,0,0.13);"></div>
<div class="cell" style="top:226.6px;height:134.4px;"></div>
<div class="code" style="left:350.7px;top:231.8px;"><span class="k">import</span> pandas <span class="k">as</span> pd


inpatient_df <span class="o">=</span> pd.<span class="f">read_csv</span>(<span class="s">r&quot;D:\March-2025\Medical_fraud\Train_In.csv&quot;</span>)
outpatient_df <span class="o">=</span> pd.<span class="f">read_csv</span>(<span class="s">&quot;D:\March-2025\Medical_fraud\Train_Out.csv&quot;</span>)
beneficiary_df <span class="o">=</span> pd.<span class="f">read_csv</span>(<span class="s">r&quot;D:\March-2025\Medical_fraud\Train_Ben.csv&quot;</span>)
fraud_labels_df <span class="o">=</span> pd.<span class="f">read_csv</span>(<span class="s">&quot;D:\March-2025\Medical_fraud\Train_label.csv&quot;</span>)</div>
<div class="cell" style="top:370px;height:133.4px;"></div>
<div class="code" style="left:350.7px;top:375.2px;">
combined_claims <span class="o">=</span> pd.<span class="f">concat</span>(<span class="g">[</span>inpatient_df, outpatient_df<span class="g">]</span>, ignore_index<span class="o">=</span><span class="k">True</span>)
combined_data <span class="o">=</span> combined_claims.<span class="f">merge</span>(beneficiary_df, on<span class="o">=</span><span class="s">&quot;BeneID&quot;</span>, how<span class="o">=</span><span class="s">&quot;left&quot;</span>)
final_dataset <span class="o">=</span> combined_data.<span class="f">merge</span>(fraud_labels_df, on<span class="o">=</span><span class="s">&quot;Provider&quot;</span>, how<span class="o">=</span><span class="s">&quot;left&quot;</span>)


final_dataset.<span class="f">head</span>()</div>
<div class="cell" style="top:712.5px;height:100px;"></div>
<div class="code" style="left:350.7px;top:717.4px;"><span class="k">from</span> sklearn.preprocessing <span class="k">import</span> MinMaxScaler

num_cols <span class="o">=</span> final_dataset.<span class="f">select_dtypes</span>(include<span class="o">=</span><span class="g">[</span><span class="s">&quot;number&quot;</span><span class="g">]</span>).<span class="f">columns</span>
final_dataset<span class="g">[</span>num_cols<span class="g">]</span> <span class="o">=</span> final_dataset<span class="g">[</span>num_cols<span class="g">]</span>.<span class="f">fillna</span>(final_dataset<span class="g">[</span>num_cols<span class="g">]</span>.<span class="f">median</span>())</div>
<div style="position:absolute;left:345.5px;top:557.3px;width:858px;height:23.4px;background:#f6f6f6;"></div>
<div style="position:absolute;left:345.5px;top:604.1px;width:858px;height:23.4px;background:#f6f6f6;"></div>
<div style="position:absolute;left:345.5px;top:533px;width:858px;height:1px;background:#b4b4b4;"></div>
<div style="position:absolute;left:1189.3px;top:514px;width:14.2px;height:18px;overflow:hidden;"><span style="position:absolute;left:0;top:3.3px;font-size:10.2px;line-height:12.75px;font-weight:700;color:#111;letter-spacing:-0.1px;">ChronicCond</span></div>
<svg style="position:absolute;left:348.8px;top:692.5px;" width="8" height="10" viewBox="0 0 8 10"><path d="M7.6 0.3 V9.7 L0.3 5Z" fill="#8a8a8a"/></svg>
<div style="position:absolute;left:363px;top:693px;width:328.5px;height:9px;background:#8c8c8c;border-radius:4.5px;"></div>
<svg style="position:absolute;left:1192px;top:692.5px;" width="8" height="10" viewBox="0 0 8 10"><path d="M0.4 0.3 V9.7 L7.7 5Z" fill="#8a8a8a"/></svg>
<span class="t" style="font-size:11.7px;line-height:14.62px;color:#4b5a59;top:13.34px;letter-spacing:0.093px;left:70.50px;">Home</span>
<span class="t" style="font-size:11.7px;line-height:14.62px;color:#1f2929;top:13.34px;letter-spacing:-0.216px;left:303.00px;">Medical_fraud_Preprocessing</span>
<span class="t" style="font-size:11.7px;line-height:14.62px;color:#4b5a59;top:13.34px;letter-spacing:-0.060px;left:535.00px;">Medical_fraud_training</span>
<span class="t" style="font-size:11.7px;line-height:14.62px;color:#4b5a59;top:13.34px;letter-spacing:-0.098px;left:768.00px;">Medical Invoice Fraud Detection</span>
<span class="t" style="font-size:14px;line-height:17.5px;color:#3f4b4a;top:54.10px;letter-spacing:-0.232px;left:154.00px;">localhost:8888/notebooks/Medical_fraud_Preprocessing.ipynb</span>
<span class="t" style="font-size:11px;line-height:13.75px;color:#525e5d;top:92.31px;left:146.60px;">K</span>
<span class="t" style="font-size:11px;line-height:13.75px;color:#525e5d;top:91.71px;letter-spacing:-0.530px;left:534.00px;">PDF</span>
<span class="t" style="font-size:11.5px;line-height:14.38px;color:#525e5d;top:91.23px;left:810.80px;">Go</span>
<span class="t" style="font-size:11.5px;line-height:14.38px;color:#525e5d;top:91.23px;letter-spacing:0.500px;left:1050.50px;">IN</span>
<span class="t" style="font-size:11.5px;line-height:14.38px;color:#525e5d;top:91.23px;letter-spacing:-0.844px;left:1100.00px;">PB</span>
<span class="t" style="font-size:11.5px;line-height:14.38px;color:#525e5d;top:91.23px;letter-spacing:-0.484px;left:1151.00px;">PC</span>
<span class="t" style="font-size:11.5px;line-height:14.38px;color:#525e5d;top:91.23px;letter-spacing:-0.484px;left:1203.00px;">PH</span>
<span class="t" style="font-size:11.5px;line-height:14.38px;color:#525e5d;top:91.23px;letter-spacing:-0.484px;left:1256.00px;">NP</span>
<span class="t" style="font-size:11.5px;line-height:14.38px;color:#525e5d;top:91.23px;letter-spacing:0.042px;left:1412.00px;">All Bookmarks</span>
<span class="t" style="font-size:16.4px;line-height:20.5px;color:#5a5a5a;top:122.17px;left:313.60px;transform:scaleX(1.1869);transform-origin:0 0;">jupyter</span>
<span class="t" style="font-size:13.5px;line-height:16.88px;color:#1c1c1c;top:127.28px;letter-spacing:0.034px;left:384.50px;">Medical_fraud_Preprocessing</span>
<span class="t" style="font-size:10px;line-height:12.5px;color:#222;top:130.48px;letter-spacing:-0.022px;left:570.00px;">Last Checkpoint: 34 minutes ago</span>
<span class="t" style="font-size:10px;line-height:12.5px;color:#2c2c2c;top:158.08px;letter-spacing:-0.242px;left:292.00px;">File</span>
<span class="t" style="font-size:10px;line-height:12.5px;color:#2c2c2c;top:158.08px;letter-spacing:0.055px;left:321.50px;">Edit</span>
<span class="t" style="font-size:10px;line-height:12.5px;color:#2c2c2c;top:158.08px;letter-spacing:0.133px;left:352.50px;">View</span>
<span class="t" style="font-size:10px;line-height:12.5px;color:#2c2c2c;top:158.08px;letter-spacing:0.020px;left:388.00px;">Run</span>
<span class="t" style="font-size:10px;line-height:12.5px;color:#2c2c2c;top:158.08px;letter-spacing:-0.281px;left:420.00px;">Kernel</span>
<span class="t" style="font-size:10px;line-height:12.5px;color:#2c2c2c;top:158.08px;letter-spacing:-0.020px;left:462.00px;">Settings</span>
<span class="t" style="font-size:10px;line-height:12.5px;color:#2c2c2c;top:158.08px;letter-spacing:0.107px;left:512.50px;">Help</span>
<span class="t" style="font-size:10px;line-height:12.5px;color:#222;top:156.08px;letter-spacing:0.078px;left:1175.50px;">Trusted</span>
<span class="t" style="font-size:10px;line-height:12.5px;color:#222;top:179.08px;left:501.00px;">Code</span>
<span class="t" style="font-size:10px;line-height:12.5px;color:#333;top:179.48px;letter-spacing:-0.165px;left:1010.50px;">JupyterLab</span>
<span class="t" style="font-size:10px;line-height:12.5px;color:#333;top:179.48px;left:1110.00px;">Python 3 (ipykernel)</span>
<span class="t m" style="font-size:9.3px;line-height:11.62px;color:#b9b9b9;top:234.31px;letter-spacing:-0.185px;left:318.60px;">[1]:</span>
<span class="t m" style="font-size:9.3px;line-height:11.62px;color:#b9b9b9;top:378.31px;letter-spacing:-0.185px;left:318.60px;">[2]:</span>
<span class="t m" style="font-size:9.3px;line-height:11.62px;color:#b9b9b9;top:720.11px;letter-spacing:-0.185px;left:318.60px;">[3]:</span>
<span class="t m" style="font-size:9.3px;line-height:11.62px;color:#b9b9b9;top:518.31px;letter-spacing:-0.185px;left:318.60px;">[2]:</span>
<span class="t" style="font-size:10.2px;line-height:12.75px;color:#111;top:517.29px;font-weight:700;letter-spacing:-0.202px;left:383.40px;">BeneID</span>
<span class="t" style="font-size:10.2px;line-height:12.75px;color:#111;top:517.29px;font-weight:700;letter-spacing:-0.140px;left:437.90px;">ClaimID</span>
<span class="t" style="font-size:10.2px;line-height:12.75px;color:#111;top:517.29px;font-weight:700;letter-spacing:-0.046px;left:485.50px;">ClaimStartDt</span>
<span class="t" style="font-size:10.2px;line-height:12.75px;color:#111;top:517.29px;font-weight:700;letter-spacing:-0.193px;left:557.00px;">ClaimEndDt</span>
<span class="t" style="font-size:10.2px;line-height:12.75px;color:#111;top:517.29px;font-weight:700;letter-spacing:-0.135px;left:628.40px;">Provider</span>
<span class="t" style="font-size:10.2px;line-height:12.75px;color:#111;top:517.29px;font-weight:700;letter-spacing:-0.229px;left:679.50px;">InscClaimAmtReimbursed</span>
<span class="t" style="font-size:10.2px;line-height:12.75px;color:#111;top:517.29px;font-weight:700;letter-spacing:-0.165px;left:812.20px;">AttendingPhysician</span>
<span class="t" style="font-size:10.2px;line-height:12.75px;color:#111;top:517.29px;font-weight:700;letter-spacing:-0.217px;left:915.20px;">OperatingPhysician</span>
<span class="t" style="font-size:10.2px;line-height:12.75px;color:#111;top:517.29px;font-weight:700;letter-spacing:-0.219px;left:1017.70px;">OtherPhysician</span>
<span class="t" style="font-size:10.2px;line-height:12.75px;color:#111;top:517.29px;font-weight:700;letter-spacing:-0.163px;left:1099.80px;">AdmissionDt</span>
<span class="t" style="font-size:10.2px;line-height:12.75px;color:#111;top:517.29px;font-weight:700;letter-spacing:-0.096px;left:1171.20px;">...</span>
<span class="t" style="font-size:10.2px;line-height:12.75px;color:#111;top:541.59px;font-weight:700;left:350.00px;">0</span>
<span class="t" style="font-size:10.2px;line-height:12.75px;color:#383838;top:541.59px;letter-spacing:-0.591px;left:366.40px;">BENE11001</span>
<span class="t" style="font-size:10.2px;line-height:12.75px;color:#383838;top:541.59px;letter-spacing:-0.321px;left:427.40px;">CLM46614</span>
<span class="t" style="font-size:10.2px;line-height:12.75px;color:#383838;top:541.59px;letter-spacing:-0.058px;left:495.10px;">2009-04-12</span>
<span class="t" style="font-size:10.2px;line-height:12.75px;color:#383838;top:541.59px;letter-spacing:-0.058px;left:561.40px;">2009-04-18</span>
<span class="t" style="font-size:10.2px;line-height:12.75px;color:#383838;top:541.59px;letter-spacing:-0.542px;left:623.40px;">PRV55912</span>
<span class="t" style="font-size:10.2px;line-height:12.75px;color:#383838;top:541.59px;letter-spacing:-0.336px;left:774.70px;">26000</span>
<span class="t" style="font-size:10.2px;line-height:12.75px;color:#383838;top:541.59px;letter-spacing:-0.494px;left:853.50px;">PHY390922</span>
<span class="t" style="font-size:10.2px;line-height:12.75px;color:#383838;top:541.59px;letter-spacing:-0.295px;left:987.40px;">NaN</span>
<span class="t" style="font-size:10.2px;line-height:12.75px;color:#383838;top:541.59px;letter-spacing:-0.295px;left:1069.80px;">NaN</span>
<span class="t" style="font-size:10.2px;line-height:12.75px;color:#383838;top:541.59px;letter-spacing:-0.058px;left:1109.40px;">2009-04-12</span>
<span class="t" style="font-size:10.2px;line-height:12.75px;color:#383838;top:541.59px;letter-spacing:-0.096px;left:1171.20px;">...</span>
<span class="t" style="font-size:10.2px;line-height:12.75px;color:#111;top:564.99px;font-weight:700;left:350.00px;">1</span>
<span class="t" style="font-size:10.2px;line-height:12.75px;color:#383838;top:564.99px;letter-spacing:-0.591px;left:366.40px;">BENE11001</span>
<span class="t" style="font-size:10.2px;line-height:12.75px;color:#383838;top:564.99px;letter-spacing:-0.321px;left:427.40px;">CLM66048</span>
<span class="t" style="font-size:10.2px;line-height:12.75px;color:#383838;top:564.99px;letter-spacing:-0.058px;left:495.10px;">2009-08-31</span>
<span class="t" style="font-size:10.2px;line-height:12.75px;color:#383838;top:564.99px;letter-spacing:-0.058px;left:561.40px;">2009-09-02</span>
<span class="t" style="font-size:10.2px;line-height:12.75px;color:#383838;top:564.99px;letter-spacing:-0.542px;left:623.40px;">PRV55907</span>
<span class="t" style="font-size:10.2px;line-height:12.75px;color:#383838;top:564.99px;letter-spacing:-0.324px;left:780.00px;">5000</span>
<span class="t" style="font-size:10.2px;line-height:12.75px;color:#383838;top:564.99px;letter-spacing:-0.494px;left:853.50px;">PHY318495</span>
<span class="t" style="font-size:10.2px;line-height:12.75px;color:#383838;top:564.99px;letter-spacing:-0.494px;left:956.20px;">PHY318495</span>
<span class="t" style="font-size:10.2px;line-height:12.75px;color:#383838;top:564.99px;letter-spacing:-0.295px;left:1069.80px;">NaN</span>
<span class="t" style="font-size:10.2px;line-height:12.75px;color:#383838;top:564.99px;letter-spacing:-0.058px;left:1109.40px;">2009-08-31</span>
<span class="t" style="font-size:10.2px;line-height:12.75px;color:#383838;top:564.99px;letter-spacing:-0.096px;left:1171.20px;">...</span>
<span class="t" style="font-size:10.2px;line-height:12.75px;color:#111;top:588.39px;font-weight:700;left:350.00px;">2</span>
<span class="t" style="font-size:10.2px;line-height:12.75px;color:#383838;top:588.39px;letter-spacing:-0.591px;left:366.40px;">BENE11001</span>
<span class="t" style="font-size:10.2px;line-height:12.75px;color:#383838;top:588.39px;letter-spacing:-0.321px;left:427.40px;">CLM68358</span>
<span class="t" style="font-size:10.2px;line-height:12.75px;color:#383838;top:588.39px;letter-spacing:-0.058px;left:495.10px;">2009-09-17</span>
<span class="t" style="font-size:10.2px;line-height:12.75px;color:#383838;top:588.39px;letter-spacing:-0.058px;left:561.40px;">2009-09-20</span>
<span class="t" style="font-size:10.2px;line-height:12.75px;color:#383838;top:588.39px;letter-spacing:-0.542px;left:623.40px;">PRV56046</span>
<span class="t" style="font-size:10.2px;line-height:12.75px;color:#383838;top:588.39px;letter-spacing:-0.324px;left:780.00px;">5000</span>
<span class="t" style="font-size:10.2px;line-height:12.75px;color:#383838;top:588.39px;letter-spacing:-0.494px;left:853.50px;">PHY372395</span>
<span class="t" style="font-size:10.2px;line-height:12.75px;color:#383838;top:588.39px;letter-spacing:-0.295px;left:987.40px;">NaN</span>
<span class="t" style="font-size:10.2px;line-height:12.75px;color:#383838;top:588.39px;letter-spacing:-0.494px;left:1038.60px;">PHY324689</span>
<span class="t" style="font-size:10.2px;line-height:12.75px;color:#383838;top:588.39px;letter-spacing:-0.058px;left:1109.40px;">2009-09-17</span>
<span class="t" style="font-size:10.2px;line-height:12.75px;color:#383838;top:588.39px;letter-spacing:-0.096px;left:1171.20px;">...</span>
<span class="t" style="font-size:10.2px;line-height:12.75px;color:#111;top:611.79px;font-weight:700;left:350.00px;">3</span>
<span class="t" style="font-size:10.2px;line-height:12.75px;color:#383838;top:611.79px;letter-spacing:-0.495px;left:366.40px;">BENE11011</span>
<span class="t" style="font-size:10.2px;line-height:12.75px;color:#383838;top:611.79px;letter-spacing:-0.321px;left:427.40px;">CLM38412</span>
<span class="t" style="font-size:10.2px;line-height:12.75px;color:#383838;top:611.79px;letter-spacing:-0.058px;left:495.10px;">2009-02-14</span>
<span class="t" style="font-size:10.2px;line-height:12.75px;color:#383838;top:611.79px;letter-spacing:-0.058px;left:561.40px;">2009-02-22</span>
<span class="t" style="font-size:10.2px;line-height:12.75px;color:#383838;top:611.79px;letter-spacing:-0.542px;left:623.40px;">PRV52405</span>
<span class="t" style="font-size:10.2px;line-height:12.75px;color:#383838;top:611.79px;letter-spacing:-0.324px;left:780.00px;">5000</span>
<span class="t" style="font-size:10.2px;line-height:12.75px;color:#383838;top:611.79px;letter-spacing:-0.494px;left:853.50px;">PHY369659</span>
<span class="t" style="font-size:10.2px;line-height:12.75px;color:#383838;top:611.79px;letter-spacing:-0.494px;left:956.20px;">PHY392961</span>
<span class="t" style="font-size:10.2px;line-height:12.75px;color:#383838;top:611.79px;letter-spacing:-0.494px;left:1038.60px;">PHY349768</span>
<span class="t" style="font-size:10.2px;line-height:12.75px;color:#383838;top:611.79px;letter-spacing:-0.058px;left:1109.40px;">2009-02-14</span>
<span class="t" style="font-size:10.2px;line-height:12.75px;color:#383838;top:611.79px;letter-spacing:-0.096px;left:1171.20px;">...</span>
<span class="t" style="font-size:10.2px;line-height:12.75px;color:#111;top:635.19px;font-weight:700;left:350.00px;">4</span>
<span class="t" style="font-size:10.2px;line-height:12.75px;color:#383838;top:635.19px;letter-spacing:-0.591px;left:366.40px;">BENE11014</span>
<span class="t" style="font-size:10.2px;line-height:12.75px;color:#383838;top:635.19px;letter-spacing:-0.321px;left:427.40px;">CLM63689</span>
<span class="t" style="font-size:10.2px;line-height:12.75px;color:#383838;top:635.19px;letter-spacing:-0.058px;left:495.10px;">2009-08-13</span>
<span class="t" style="font-size:10.2px;line-height:12.75px;color:#383838;top:635.19px;letter-spacing:-0.058px;left:561.40px;">2009-08-30</span>
<span class="t" style="font-size:10.2px;line-height:12.75px;color:#383838;top:635.19px;letter-spacing:-0.542px;left:623.40px;">PRV56614</span>
<span class="t" style="font-size:10.2px;line-height:12.75px;color:#383838;top:635.19px;letter-spacing:-0.336px;left:774.70px;">10000</span>
<span class="t" style="font-size:10.2px;line-height:12.75px;color:#383838;top:635.19px;letter-spacing:-0.494px;left:853.50px;">PHY379376</span>
<span class="t" style="font-size:10.2px;line-height:12.75px;color:#383838;top:635.19px;letter-spacing:-0.494px;left:956.20px;">PHY398258</span>
<span class="t" style="font-size:10.2px;line-height:12.75px;color:#383838;top:635.19px;letter-spacing:-0.295px;left:1069.80px;">NaN</span>
<span class="t" style="font-size:10.2px;line-height:12.75px;color:#383838;top:635.19px;letter-spacing:-0.058px;left:1109.40px;">2009-08-13</span>
<span class="t" style="font-size:10.2px;line-height:12.75px;color:#383838;top:635.19px;letter-spacing:-0.096px;left:1171.20px;">...</span>
<span class="t" style="font-size:10.2px;line-height:12.75px;color:#383838;top:664.79px;letter-spacing:0.355px;left:345.50px;">5 rows × 55 columns</span>
<div style="position:absolute;left:912px;top:8px;width:26px;height:24px;background:linear-gradient(90deg,rgba(205,229,226,0),#cde5e2);"></div>
<svg style="position:absolute;left:180px;top:193.4px;" width="13" height="19" viewBox="0 0 13 19"><path d="M0.7 0.9 V15.3 L4 12.2 L6.5 17.6 L8.7 16.6 L6.3 11.4 H10.8Z" fill="#ffffff" stroke="#111111" stroke-width="1" stroke-linejoin="round"/></svg>
<svg style="position:absolute;left:579.2px;top:466px;" width="6" height="13" viewBox="0 0 6 13"><path d="M0.4 0.6 H1.8 Q3 0.6 3 1.8 Q3 0.6 4.2 0.6 H5.6 M0.4 12.4 H1.8 Q3 12.4 3 11.2 Q3 12.4 4.2 12.4 H5.6 M3 1.4 V11.6" fill="none" stroke="#444444" stroke-width="1"/></svg>
<div style="position:absolute;left:1432px;top:761px;width:63px;height:31px;background:#333333;"></div>
<div style="position:absolute;left:1463px;top:761px;width:1px;height:31px;background:#3d3d3d;"></div>
<div style="position:absolute;left:1441px;top:770px;width:4.6px;height:14px;background:#b4b4b4;"></div>
<div style="position:absolute;left:1449.6px;top:770px;width:4.6px;height:14px;background:#b4b4b4;"></div>
<svg style="position:absolute;left:1470px;top:770px;" width="19" height="15" viewBox="0 0 19 15"><rect x="0.6" y="0.6" width="17.8" height="13.8" fill="none" stroke="#b4b4b4" stroke-width="1.1"/><circle cx="9.5" cy="5.4" r="2.4" fill="#b4b4b4"/><path d="M4 14 Q4.4 9.6 9.5 9.4 Q14.6 9.6 15 14Z" fill="#b4b4b4"/></svg>
</div>
</body></html>
